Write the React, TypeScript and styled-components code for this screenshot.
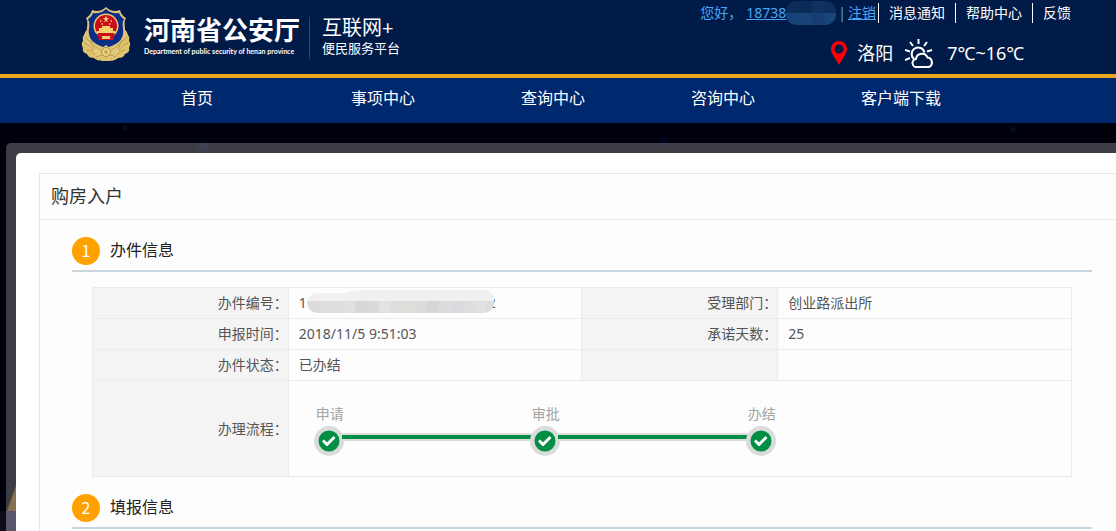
import React from "react";
import styled, { createGlobalStyle } from "styled-components";

const GlobalStyle = createGlobalStyle`
  * { box-sizing: border-box; }
  html, body { margin: 0; padding: 0; }
  body {
    min-height: 100vh;
    overflow-x: hidden;
    background: #00000c;
    color: #555;
    font: 14px/20px "Noto Sans", "Noto Sans CJK SC", sans-serif;
  }
  #root { min-height: 100vh; display: flex; }
  h1, h2, ol, ul, p { margin: 0; padding: 0; font-weight: 400; list-style: none; }
  a { color: inherit; text-decoration: none; }
`;

const Page = styled.div`
  flex: 1;
  min-width: 0;
  display: flex;
  flex-direction: column;
`;

const Header = styled.header`
  display: flex;
  justify-content: space-between;
  height: 78px;
  padding: 0 45px 0 80px;
  background: #001b48;
  border-bottom: 4px solid #e9a822;
  color: #fff;
`;

const Brand = styled.a`
  display: flex;
  align-items: flex-start;
  padding-top: 6px;
`;

const BrandName = styled.span`
  display: flex;
  flex-direction: column;
  margin: 7px 0 0 12px;
  white-space: nowrap;
`;

const BrandTitle = styled.strong`
  font: 700 26px/32px "Noto Sans CJK SC", sans-serif;
`;

const BrandEnglish = styled.span`
  font: 700 7px/12px Lato, sans-serif;
`;

const BrandSide = styled.span`
  display: flex;
  flex-direction: column;
  height: 42px;
  margin: 11px 0 0 9px;
  padding-left: 12px;
  border-left: 1px solid #1f4a80;
  white-space: nowrap;
  font-size: 13px;
  line-height: 18px;
`;

const BrandSideTitle = styled.span`
  font-size: 20px;
  line-height: 22px;
`;

const HeaderSide = styled.div`
  display: flex;
  flex-direction: column;
  gap: 14px;
  white-space: nowrap;
`;

const UserBar = styled.div`
  display: flex;
  align-items: center;
  padding-top: 3px;
`;

const Greeting = styled.span`
  display: flex;
  align-items: center;
  padding-right: 2px;
  color: #4aa5f5;
`;

const Hello = styled.span`
  margin-right: 4px;
`;

const AccountLink = styled.a`
  display: flex;
  align-items: center;
  height: 20px;
  text-decoration: underline;
`;

const TopLink = styled.a`
  padding: 0 10px;
  border-left: 1px solid #fff;
  &:last-child { padding-right: 0; }
`;

const Bar = styled.span`
  margin: 0 2px;
`;

const Weather = styled.div`
  display: flex;
  align-items: center;
  height: 32px;
  padding-left: 131px;
  font-size: 18px;
  line-height: 24px;
`;

const City = styled.span`
  margin: 0 12px 0 10px;
`;

const Temperature = styled.span`
  margin-left: 12px;
`;

const Nav = styled.nav`
  display: flex;
  height: 45px;
  padding-left: 181px;
  background: #00286e;
`;

const NavLink = styled.a`
  flex: 0 0 170px;
  color: #fff;
  font-size: 16px;
  line-height: 41px;
  white-space: nowrap;
`;

const Backdrop = styled.main`
  flex: 1;
  display: flex;
  padding: 20px 0 0 6px;
  background:
    radial-gradient(circle at 125px 5px, #001428 0, transparent 4px),
    radial-gradient(circle at 203px 23px, #06062a 0, transparent 8px),
    radial-gradient(circle at 664px 19px, #06062a 0, transparent 8px),
    radial-gradient(circle at 1013px 6px, #001428 0, transparent 4px),
    linear-gradient(to bottom right, transparent 50%, #644420 60%) 6px 360px / 10px 28px no-repeat,
    linear-gradient(to right, #0c0c18 6px, #25223a 6px) 0 388px / 16px 100% no-repeat,
    #00000c;
`;

const Frame = styled.div`
  flex: 1;
  min-width: 0;
  display: flex;
  padding: 10px 0 0 10px;
  border-radius: 5px 0 0 0;
  background: rgba(255, 255, 255, 0.24);
`;

const Sheet = styled.div`
  flex: 1;
  min-width: 0;
  display: flex;
  padding: 20px 0 0 23px;
  border-radius: 5px 0 0 0;
  background: #fff;
`;

const Panel = styled.article`
  flex: 1;
  min-width: 0;
  border: solid #e9e9e9;
  border-width: 1px 0 0 1px;
  background: #fdfdfd;
`;

const PanelTitle = styled.h1`
  padding: 0 11px;
  border-bottom: 1px solid #e9e9e9;
  color: #333;
  font-size: 18px;
  line-height: 45px;
`;

const Section = styled.section`
  margin: 17px 24px 0 32px;
`;

const SectionHead = styled.h2`
  display: flex;
  align-items: flex-start;
  gap: 10px;
  height: 35px;
  border-bottom: 2px solid #c9d5de;
  color: #222;
  font-size: 16px;
  line-height: 26px;
`;

const StepNumber = styled.span`
  width: 28px;
  height: 28px;
  border-radius: 50%;
  background: #ffa200;
  color: #fff;
  text-align: center;
  font-family: "Noto Sans CJK SC", sans-serif;
`;

const TableBox = styled.div`
  padding: 15px 20px 0;
`;

const InfoTable = styled.table`
  width: 100%;
  table-layout: fixed;
  border-collapse: collapse;
`;

const Label = styled.th`
  height: 31px;
  padding: 0;
  border: 1px solid #ebebeb;
  background: #f4f4f4;
  font-weight: 400;
  text-align: right;
`;

const Value = styled.td`
  height: 31px;
  padding: 0 10px;
  border: 1px solid #ebebeb;
`;

const Masked = styled.span`
  display: flex;
  align-items: center;
  height: 20px;
  svg { position: relative; margin: -4px -6px 0 0; }
`;

const FlowCell = styled(Value)`
  height: 96px;
  padding: 2px 24px 0 25px;
`;

const Steps = styled.ol`
  display: flex;
`;

const Step = styled.li`
  flex: 0 0 216px;
  display: flex;
  flex-direction: column;
  gap: 2px;
  color: #a3a3a3;
  &:last-child { flex-basis: 32px; }
`;

const StepLabel = styled.span`
  padding-left: 2px;
`;

const StepTrack = styled.span`
  display: flex;
  align-items: flex-start;
`;

const StepLine = styled.span`
  flex: 1;
  height: 8px;
  margin: 7px -2px 0;
  border: solid #dcdcdc;
  border-width: 2px 0;
  background: #008e45;
`;

function Emblem() {
  return (
    <svg width="52" height="56" viewBox="0 0 52 56" aria-hidden="true">
      <path d="M7 24c-2 1-2 3-3 5-2 2-1 4-1 6-2 2-1 5 0 7-1 3 1 5 4 6 1 3 4 4 7 4 3 3 8 3 12 3s9 0 12-3c3 0 6-1 7-4 3-1 5-3 4-6 1-2 2-5 0-7 0-2 1-4-1-6-1-2-1-4-3-5z" fill="#dfc470" />
      <path d="M26 1c4 4 9 5 14 3 1 4 3 6 6 8-3 5 0 10-1 16-1 8-8 14-19 18C15 42 8 36 7 28 6 22 9 17 6 12c3-2 5-4 6-8 5 2 10 1 14-3z" fill="#dcc27a" />
      <path d="M26 3c4 4 9 5 13 4 1 3 3 5 5 6-3 5 0 10-1 15-1 7-7 11-17 14C16 39 10 35 9 28c-1-5 2-10-1-15 2-1 4-3 5-6 4 1 9 0 13-4z" fill="#0a2d86" />
      <circle cx="26" cy="20" r="12.500" fill="#e7cb72" />
      <circle cx="26" cy="20" r="11" fill="#cc0d1a" />
      <path d="m26 10 1 2h2l-2 2 1 2-2-1-2 1 1-2-2-2h2zM20 14l2 1-2 1zM32 14l-2 1 2 1zM21 18l2-1v2zM31 18l-2-1v2zM19 25v-3h3v-2h8v2h3v3h2v2H17v-2z" fill="#f2d36d" />
      <path d="M17 28h18l-2 6H19z" fill="#cc0d1a" />
      <path d="M22 30h8v3h-8z" fill="#e7cb72" />
      <path d="M8 30c2 6 8 10 14 12l4-3 4 3c6-2 12-6 14-12l-1 14-9 7H18l-9-7z" fill="#e3ca7a" />
      <path d="M5 31c4 3 7 7 9 12M4 37c4 1 7 4 9 8M7 44c3 0 6 2 8 5M47 31c-4 3-7 7-9 12M48 37c-4 1-7 4-9 8M45 44c-3 0-6 2-8 5M10 34c3 5 6 8 11 10M42 34c-3 5-6 8-11 10M16 51c6-3 14-3 20 0" fill="none" stroke="#b99a4c" />
      <circle cx="26" cy="46" r="4.500" fill="#ecd27d" stroke="#b18d3d" />
      <path d="M24 46h4M26 44v4" stroke="#b18d3d" />
    </svg>
  );
}

function Pin() {
  return (
    <svg width="16" height="24" viewBox="0 0 16 24" aria-hidden="true">
      <path fillRule="evenodd" d="M8 0a8 8 0 0 0-8 8c0 4 4 9 8 16 4-7 8-12 8-16a8 8 0 0 0-8-8zm0 3.500a4.500 4.500 0 1 1 0 9 4.500 4.500 0 0 1 0-9z" fill="#fb0007" />
    </svg>
  );
}

function PartlyCloudy() {
  return (
    <svg width="30" height="29" viewBox="0 0 30 29" fill="none" stroke="#fff" strokeWidth="2" aria-hidden="true">
      <path d="M13.500 0v5M5 3l3 4M22 3l-3 4M0 11l5 1.500M27 11l-5 1.500M0 21l5-2" />
      <path d="M9 20a6.500 6.500 0 1 1 10.500-6.500" />
      <path d="M12 28a4 4 0 0 1-1-8 6 6 0 0 1 11.500-1.500A5 5 0 0 1 24 28z" strokeLinejoin="round" />
    </svg>
  );
}

function Check() {
  return (
    <svg width="30" height="30" viewBox="0 0 30 30" aria-hidden="true">
      <circle cx="15" cy="15" r="15" fill="#dadcdb" />
      <circle cx="15" cy="15" r="10.500" fill="#008e45" />
      <path d="m9 14.500 4 4 7.500-7.500" fill="none" stroke="#fff" strokeWidth="3" />
    </svg>
  );
}

function PhoneMask() {
  const top = ["#0c2d58", "#0a2b57", "#0e3361", "#0c2f5c"];
  const bottom = ["#174277", "#194379", "#163e72", "#18457c"];
  return (
    <svg width="50" height="24" viewBox="0 0 50 24" aria-hidden="true">
      <clipPath id="phone"><rect width="50" height="24" rx="10" /></clipPath>
      <g clipPath="url(#phone)">
        {top.map((c, i) => <rect key={i} x={i * 13} width="13" height="12" fill={c} />)}
        {bottom.map((c, i) => <rect key={i} x={i * 13} y="12" width="13" height="12" fill={c} />)}
      </g>
    </svg>
  );
}

function NumberMask() {
  const bottom = ["#dcdcdd", "#dfdede", "#dededf", "#e2e0df", "#d6d7d8", "#d9d9d9", "#e1e3e3", "#dcdede", "#dfdedb", "#dcdbda", "#d5d6d8", "#dcdcda", "#d8dadd", "#dedddb", "#e1e1e0", "#dcdcdc"];
  return (
    <svg width="187" height="23" viewBox="0 0 187 23" aria-hidden="true">
      <clipPath id="number"><path d="M10 3h28q10-3 20-3h120a9 9 0 0 1 9 9v4a10 10 0 0 1-10 10H10A10 10 0 0 1 10 3z" /></clipPath>
      <g clipPath="url(#number)">
        <rect width="187" height="11" fill="#f0f0f0" />
        {bottom.map((c, i) => <rect key={i} x={i * 12} y="11" width="12" height="12" fill={c} />)}
      </g>
    </svg>
  );
}

const navItems = ["首页", "事项中心", "查询中心", "咨询中心", "客户端下载"];
const steps = ["申请", "审批", "办结"];

export default function App() {
  return (
    <Page>
      <GlobalStyle />
      <Header>
        <Brand href="#">
          <Emblem />
          <BrandName>
            <BrandTitle>河南省公安厅</BrandTitle>
            <BrandEnglish>Department of public security of henan province</BrandEnglish>
          </BrandName>
          <BrandSide>
            <BrandSideTitle>互联网+</BrandSideTitle>
            便民服务平台
          </BrandSide>
        </Brand>
        <HeaderSide>
          <UserBar>
            <Greeting>
              <Hello>您好，</Hello>
              <AccountLink href="#">18738<PhoneMask /></AccountLink>
              <Bar>|</Bar>
              <AccountLink href="#">注销</AccountLink>
            </Greeting>
            <TopLink href="#">消息通知</TopLink>
            <TopLink href="#">帮助中心</TopLink>
            <TopLink href="#">反馈</TopLink>
          </UserBar>
          <Weather>
            <Pin />
            <City>洛阳</City>
            <PartlyCloudy />
            <Temperature>7℃~16℃</Temperature>
          </Weather>
        </HeaderSide>
      </Header>
      <Nav>
        {navItems.map((item) => <NavLink key={item} href="#">{item}</NavLink>)}
      </Nav>
      <Backdrop>
        <Frame>
          <Sheet>
            <Panel>
              <PanelTitle>购房入户</PanelTitle>
              <Section>
                <SectionHead><StepNumber>1</StepNumber>办件信息</SectionHead>
                <TableBox>
                  <InfoTable>
                    <colgroup>
                      <col style={{ width: "20%" }} />
                      <col style={{ width: "30%" }} />
                      <col style={{ width: "20%" }} />
                      <col style={{ width: "30%" }} />
                    </colgroup>
                    <tbody>
                      <tr>
                        <Label scope="row">办件编号：</Label>
                        <Value><Masked>1<NumberMask />2</Masked></Value>
                        <Label scope="row">受理部门：</Label>
                        <Value>创业路派出所</Value>
                      </tr>
                      <tr>
                        <Label scope="row">申报时间：</Label>
                        <Value>2018/11/5 9:51:03</Value>
                        <Label scope="row">承诺天数：</Label>
                        <Value>25</Value>
                      </tr>
                      <tr>
                        <Label scope="row">办件状态：</Label>
                        <Value>已办结</Value>
                        <Label />
                        <Value />
                      </tr>
                      <tr>
                        <Label scope="row">办理流程：</Label>
                        <FlowCell colSpan={3}>
                          <Steps>
                            {steps.map((name, i) => (
                              <Step key={name}>
                                <StepLabel>{name}</StepLabel>
                                <StepTrack>
                                  <Check />
                                  {i < steps.length - 1 && <StepLine />}
                                </StepTrack>
                              </Step>
                            ))}
                          </Steps>
                        </FlowCell>
                      </tr>
                    </tbody>
                  </InfoTable>
                </TableBox>
              </Section>
              <Section>
                <SectionHead><StepNumber>2</StepNumber>填报信息</SectionHead>
              </Section>
            </Panel>
          </Sheet>
        </Frame>
      </Backdrop>
    </Page>
  );
}
